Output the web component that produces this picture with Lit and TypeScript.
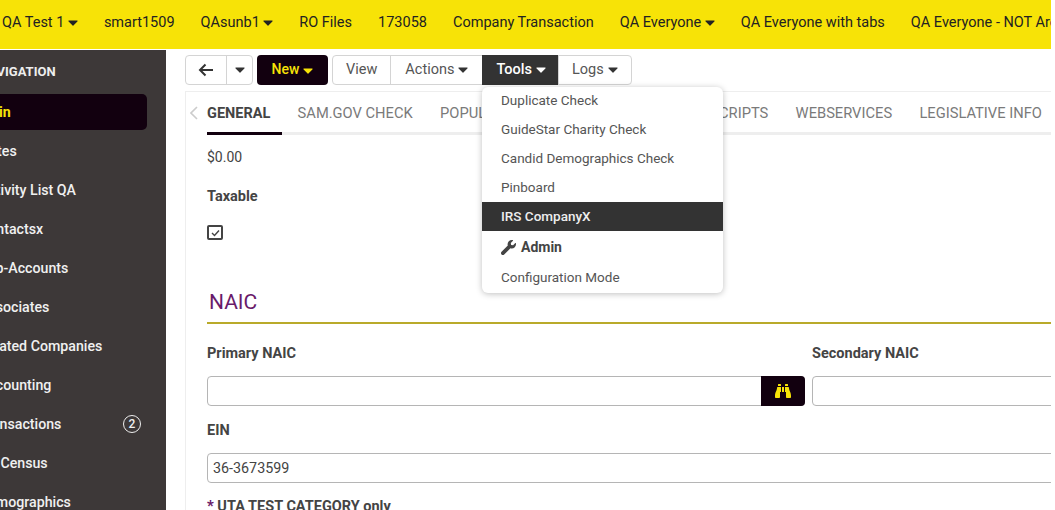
import { LitElement, html, css, svg } from "lit";
import { customElement } from "lit/decorators.js";

const caret = html`<svg class="caret" viewBox="0 0 10 6"><path d="M1 .6h8c.5 0 .8.6.4 1L5.4 5.4c-.2.3-.6.3-.8 0L.6 1.6C.2 1.2.5.6 1 .6z" fill="currentColor"/></svg>`;
const wrench = svg`<path d="M507.73 109.1c-2.24-9.03-13.54-12.09-20.12-5.51l-74.36 74.36-67.88-11.31-11.31-67.88 74.36-74.36c6.62-6.62 3.43-17.9-5.66-20.16-47.38-11.74-99.55.91-136.58 37.93-39.64 39.64-50.55 97.1-34.05 147.2L18.74 402.76c-24.99 24.99-24.99 65.51 0 90.5 24.99 24.99 65.51 24.99 90.5 0l213.21-213.21c50.12 16.71 107.47 5.68 147.37-34.22 37.07-37.07 49.7-89.32 37.91-136.73z" fill="currentColor"/>`;
const binoculars = svg`<path d="M416 48c0-8.84-7.16-16-16-16h-64c-8.84 0-16 7.16-16 16v48h96V48zM63.91 159.99C61.4 253.84 3.46 274.22 0 404v44c0 17.67 14.33 32 32 32h96c17.67 0 32-14.33 32-32V288h32V128H95.84c-17.63 0-31.45 14.37-31.93 31.99zm384.18 0c-.48-17.62-14.3-31.99-31.93-31.99H320v160h32v160c0 17.67 14.33 32 32 32h96c17.67 0 32-14.33 32-32v-44c-3.46-129.78-61.4-150.16-63.91-244.01zM176 32h-64c-8.84 0-16 7.16-16 16v48h96V48c0-8.84-7.16-16-16-16zm48 256h64V128h-64v160z" fill="currentColor"/>`;

@customElement("app-root")
export class AppRoot extends LitElement {
  static styles = css`
    :host { display: block; width: 1051px; height: 510px; overflow: hidden; background: #fff; font-family: Roboto, sans-serif; font-size: 14.5px; color: #444; position: relative; }
    * { box-sizing: border-box; }
    .caret { width: 10px; height: 6px; margin-left: 4px; vertical-align: 1px; }
    .top { height: 49px; background: #f7e307; display: flex; align-items: center; gap: 26px; padding: 0 0 4px 2px; white-space: nowrap; overflow: hidden; color: #222; margin-bottom: 1px; }
    .top .caret { margin-left: 3.5px; }
    .body { display: grid; grid-template-columns: 166px 885px; height: 460px; }
    .side { background: #3d3838; overflow: hidden; color: #f0f0f0; font-weight: 500; font-size: 14.2px; white-space: nowrap; height: 460px; }
    .side h3 { margin: 14px 0 14px -21px; font-size: 13px; font-weight: 700; line-height: 16px; color: #eee; }
    .nav { display: flex; flex-direction: column; gap: 3px; width: 147px; }
    .nav div { height: 36px; display: flex; align-items: center; justify-content: space-between; padding: 0 6px 0 0; border-radius: 0 5px 5px 0; }
    .nav span { margin-left: -21px; }
    .nav .on { background: #12000f; color: #f7e307; font-weight: 700; }
    .nav .n { margin: 0; width: 18px; height: 18px; border: 1px solid #eee; border-radius: 50%; font-size: 12px; display: flex; align-items: center; justify-content: center; }
    .main { padding-left: 19px; overflow: hidden; position: relative; }
    .bar { display: flex; gap: 4px; margin-top: 5px; height: 30px; }
    .grp { display: flex; border: 1px solid #d4d4d4; border-radius: 4px; color: #555; background: #fff; }
    .grp > div { display: flex; align-items: center; justify-content: center; border-left: 1px solid #d4d4d4; padding: 0 13px 2px; }
    .grp > div:first-child { border-left: 0; }
    .grp .caret { color: #333; margin-top: 2px; }
    .grp .actions { padding: 0 14px 2px; }
    .grp .dark { background: #333; color: #fff; font-weight: 500; margin: -1px 0; border: 0; padding: 0 12px 2px 14px; }
    .grp .dark .caret { color: #fff; }
    .back { width: 40px; padding: 0 !important; color: #333; }
    .more { width: 26px; padding: 0 !important; color: #444; }
    .more .caret { margin: 0; }
    .new { background: #12000f; color: #f7e307; font-weight: 500; border-radius: 4px; display: flex; align-items: center; justify-content: center; width: 71px; padding-bottom: 2px; font-size: 14px; }
    .new .caret { margin-top: 3px; }
    .panel { margin-top: 6px; border-left: 1px solid #eee; border-top: 1px solid #eee; width: 880px; padding-left: 21px; height: 420px; position: relative; }
    .chev { position: absolute; left: 4px; top: 14px; width: 8px; height: 14px; color: #ccc; }
    .tabs { display: flex; gap: 27.3px; height: 43px; padding-top: 13px; white-space: nowrap; border-bottom: 3px solid #eee; color: #7a7a7a; font-weight: 400; font-size: 14.7px; width: 880px; line-height: 16px; }
    .tabs .on { color: #444; font-weight: 700; font-size: 14.5px; position: relative; height: 27px; padding-top: 1px; }
    .tabs .on::after { content: ""; position: absolute; left: 0; right: -12px; top: 27px; height: 3px; background: #12000f; }
    .tabs .under { padding-right: 2px; }
    .val { margin-top: 12px; line-height: 20px; font-size: 14px; }
    .lbl { font-weight: 700; line-height: 19px; padding-top: 1px; color: #444; }
    .taxable { margin-top: 19px; }
    .chk { width: 16px; height: 15px; border: 2px solid #444; border-radius: 2px; margin-top: 19px; display: flex; align-items: center; justify-content: center; }
    .chk svg { width: 9px; height: 8px; }
    h2 { margin: 49px 0 0; padding: 0 0 6px 2px; font-size: 21px; line-height: 27px; font-weight: 400; color: #6a1b6a; border-bottom: 2px solid #b9aa2a; }
    .form { display: grid; grid-template-columns: 598px 400px; column-gap: 7px; margin-top: 19px; }
    .field { display: flex; flex-direction: column; }
    .input { height: 30px; margin-top: 13px; border: 1px solid #b5b5b5; border-radius: 4px; padding: 0 5px; display: flex; align-items: center; color: #444; background: #fff; position: relative; font-size: 14.3px; }
    .input.wide { width: 1000px; }
    .find { position: absolute; right: -1px; top: -1px; bottom: -1px; width: 44px; background: #12000f; color: #f7e307; border-radius: 0 4px 4px 0; display: flex; align-items: center; justify-content: center; }
    .find svg { width: 16px; height: 16px; }
    .ein { margin-top: 14px; }
    .req { margin-top: 13px; }
    .req b { color: #6a1b6a; }
    .menu { position: absolute; left: 316px; top: 37px; width: 241px; height: 206px; background: #fff; border-radius: 6px; box-shadow: 0 1px 6px rgba(0,0,0,.25); display: flex; flex-direction: column; color: #555; z-index: 2; font-size: 13.5px; }
    .menu div { height: 29px; padding: 0 0 2px 19px; display: flex; align-items: center; flex: none; }
    .menu div:first-child { height: 28px; }
    .menu .sel { background: #333; color: #eee; font-weight: 500; }
    .menu .adm { font-weight: 700; color: #444; height: 32px; font-size: 14px; padding: 0 0 0 19px; }
    .menu svg { width: 15px; height: 15px; margin-right: 5px; }
  `;

  render() {
    const nav = ["Main", "Notes", "Activity List QA", "Contactsx", "Sub-Accounts", "Associates", "Related Companies", "Accounting", "Transactions", "US Census", "Demographics"];
    return html`
      <div class="top">
        <span>QA Test 1${caret}</span><span>smart1509</span><span>QAsunb1${caret}</span><span>RO Files</span><span>173058</span><span>Company Transaction</span><span>QA Everyone${caret}</span><span>QA Everyone with tabs</span><span>QA Everyone - NOT Archived</span>
      </div>
      <div class="body">
        <aside class="side">
          <h3>NAVIGATION</h3>
          <div class="nav">
            ${nav.map((n, i) => html`<div class=${i === 0 ? "on" : ""}><span>${n}</span>${n === "Transactions" ? html`<span class="n">2</span>` : ""}</div>`)}
          </div>
        </aside>
        <main class="main">
          <div class="bar">
            <div class="grp">
              <div class="back"><svg width="16" height="14" viewBox="0 0 16 14"><path d="M15 7H2M7.5 1.5 2 7l5.5 5.5" fill="none" stroke="currentColor" stroke-width="2"/></svg></div>
              <div class="more">${caret}</div>
            </div>
            <div class="new">New${caret}</div>
            <div class="grp">
              <div>View</div>
              <div class="actions">Actions${caret}</div>
              <div class="dark">Tools${caret}</div>
              <div>Logs${caret}</div>
            </div>
          </div>
          <div class="menu">
            <div>Duplicate Check</div>
            <div>GuideStar Charity Check</div>
            <div>Candid Demographics Check</div>
            <div>Pinboard</div>
            <div class="sel">IRS CompanyX</div>
            <div class="adm"><svg viewBox="0 0 512 512">${wrench}</svg>Admin</div>
            <div>Configuration Mode</div>
          </div>
          <section class="panel">
            <svg class="chev" viewBox="0 0 8 14"><path d="M7 1 1 7l6 6" fill="none" stroke="currentColor" stroke-width="1.6"/></svg>
            <div class="tabs">
              <div class="on">GENERAL</div><div>SAM.GOV CHECK</div><div>POPULATION</div><div class="under">DOCUMENTS</div><div>TRANSCRIPTS</div><div>WEBSERVICES</div><div>LEGISLATIVE INFO</div>
            </div>
            <div class="val">$0.00</div>
            <div class="lbl taxable">Taxable</div>
            <div class="chk"><svg viewBox="0 0 9 8"><path d="M1 4l2.5 2.5L8 1.5" fill="none" stroke="#444" stroke-width="1.4"/></svg></div>
            <h2>NAIC</h2>
            <div class="form">
              <div class="field"><div class="lbl">Primary NAIC</div><div class="input"><div class="find"><svg viewBox="0 0 512 512">${binoculars}</svg></div></div></div>
              <div class="field"><div class="lbl">Secondary NAIC</div><div class="input"></div></div>
            </div>
            <div class="lbl ein">EIN</div>
            <div class="input wide">36-3673599</div>
            <div class="lbl req"><b>*</b> UTA TEST CATEGORY only</div>
          </section>
        </main>
      </div>
    `;
  }
}
